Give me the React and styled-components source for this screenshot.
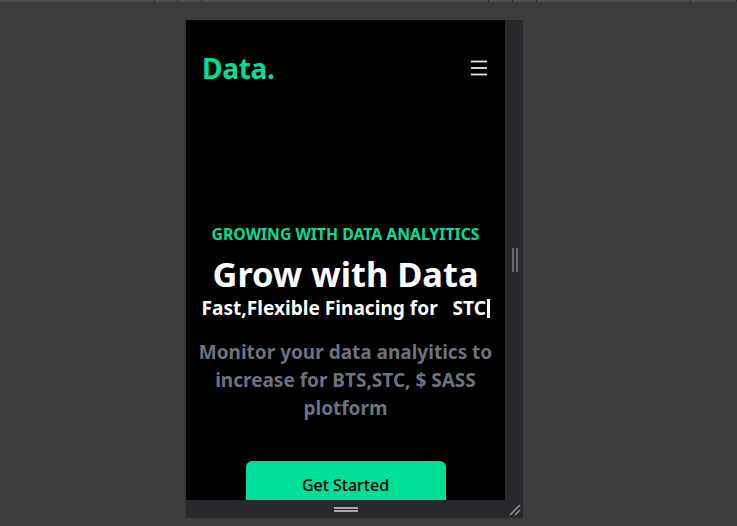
import React from 'react';
import styled, { createGlobalStyle } from 'styled-components';

const GlobalStyle = createGlobalStyle`
  * { box-sizing: border-box; }
  html, body {
    margin: 0;
    padding: 0;
    background: #3c3c3c;
    font-family: "Noto Sans", "Open Sans", sans-serif;
  }
`;

const Page = styled.div`
  width: 737px;
  height: 526px;
  overflow: hidden;
  display: flex;
  flex-direction: column;
`;

const TabStrip = styled.div`
  height: 2px;
  display: flex;
  background: #505053;
`;

const Tab = styled.div`
  width: ${({ w }) => w}px;
  border-right: 1px solid #2a2a2c;
`;

const Stage = styled.div`
  padding: 18px 0 0 185px;
`;

const Device = styled.div`
  width: 338px;
  display: flex;
  flex-direction: column;
  border-left: 1px solid #333336;
`;

const DeviceRow = styled.div`
  display: flex;
`;

const Viewport = styled.div`
  width: 319px;
  height: 480px;
  background: #000;
  overflow: hidden;
  color: #fff;
`;

const SideGutter = styled.div`
  width: 18px;
  background: #28292c;
  display: flex;
  align-items: center;
  justify-content: center;
`;

const SideHandle = styled.div`
  width: 6px;
  height: 24px;
  display: flex;
  justify-content: space-between;
  margin-left: 2px;
  & > span {
    width: 2px;
    background: #a7a7a9;
    border: 0.5px solid #6c6c70;
  }
`;

const BottomBar = styled.div`
  height: 18px;
  background: #28292c;
  display: flex;
  align-items: center;
  justify-content: center;
  position: relative;
`;

const BottomHandle = styled.div`
  width: 24px;
  height: 5px;
  display: flex;
  flex-direction: column;
  justify-content: space-between;
  margin-left: -18px;
  & > span {
    height: 2px;
    background: #a7a7a9;
  }
`;

const Corner = styled.svg`
  position: absolute;
  right: 2px;
  bottom: 2px;
`;

const Nav = styled.nav`
  height: 96px;
  padding: 0 16px;
  display: flex;
  justify-content: space-between;
  align-items: center;
`;

const Logo = styled.h1`
  margin: 0;
  font-size: 28px;
  line-height: 36px;
  font-weight: 700;
  color: #00df9a;
  letter-spacing: -0.3px;
`;

const Hero = styled.section`
  display: flex;
  flex-direction: column;
  align-items: center;
  text-align: center;
  padding-top: 98px;
`;

const Label = styled.p`
  margin: 0;
  padding: 8px;
  font-size: 15.8px;
  line-height: 24px;
  font-weight: 700;
  color: #00df9a;
`;

const Title = styled.h1`
  margin: 0;
  font-size: 34.4px;
  line-height: 40px;
  font-weight: 700;
`;

const Sub = styled.div`
  font-size: 19.1px;
  line-height: 28px;
  font-weight: 700;
  white-space: pre;
`;

const Cursor = styled.span`
  display: inline-block;
  width: 2.5px;
  height: 19px;
  margin-left: 1px;
  vertical-align: -3px;
  background: #fff;
`;

const Text = styled.p`
  margin: 16px 0 0;
  padding: 0 12px;
  font-size: 19px;
  line-height: 28px;
  font-weight: 700;
  color: #6b7280;
`;

const Button = styled.button`
  margin-top: 39px;
  width: 200px;
  height: 48px;
  border: none;
  border-radius: 6px;
  background: #00df9a;
  color: #000;
  font-family: inherit;
  font-size: 16px;
  font-weight: 500;
  padding: 0;
`;

const MenuIcon = () => (
  <svg width="20" height="20" viewBox="0 0 20 20">
    <g stroke="#e6e6e6" strokeWidth="1.8">
      <line x1="2" y1="3.5" x2="18" y2="3.5" />
      <line x1="2" y1="10" x2="18" y2="10" />
      <line x1="2" y1="16.5" x2="18" y2="16.5" />
    </g>
  </svg>
);

const tabs = [155, 23, 24, 287, 24, 24, 154, 46];

export default function App() {
  return (
    <Page>
      <GlobalStyle />
      <TabStrip>
        {tabs.map((w, i) => (
          <Tab key={i} w={w} />
        ))}
      </TabStrip>
      <Stage>
        <Device>
          <DeviceRow>
            <Viewport>
              <Nav>
                <Logo>Data.</Logo>
                <MenuIcon />
              </Nav>
              <Hero>
                <Label>GROWING WITH DATA ANALYITICS</Label>
                <Title>Grow with Data</Title>
                <Sub>
                  Fast,Flexible Finacing for   STC<Cursor />
                </Sub>
                <Text>Monitor your data analyitics to increase for BTS,STC, $ SASS plotform</Text>
                <Button>Get Started</Button>
              </Hero>
            </Viewport>
            <SideGutter>
              <SideHandle>
                <span />
                <span />
              </SideHandle>
            </SideGutter>
          </DeviceRow>
          <BottomBar>
            <BottomHandle>
              <span />
              <span />
            </BottomHandle>
            <Corner width="12" height="12" viewBox="0 0 12 12">
              <g stroke="#8d8d90" strokeWidth="1.6">
                <line x1="1" y1="11" x2="11" y2="1" />
                <line x1="6" y1="11" x2="11" y2="6" />
              </g>
            </Corner>
          </BottomBar>
        </Device>
      </Stage>
    </Page>
  );
}
